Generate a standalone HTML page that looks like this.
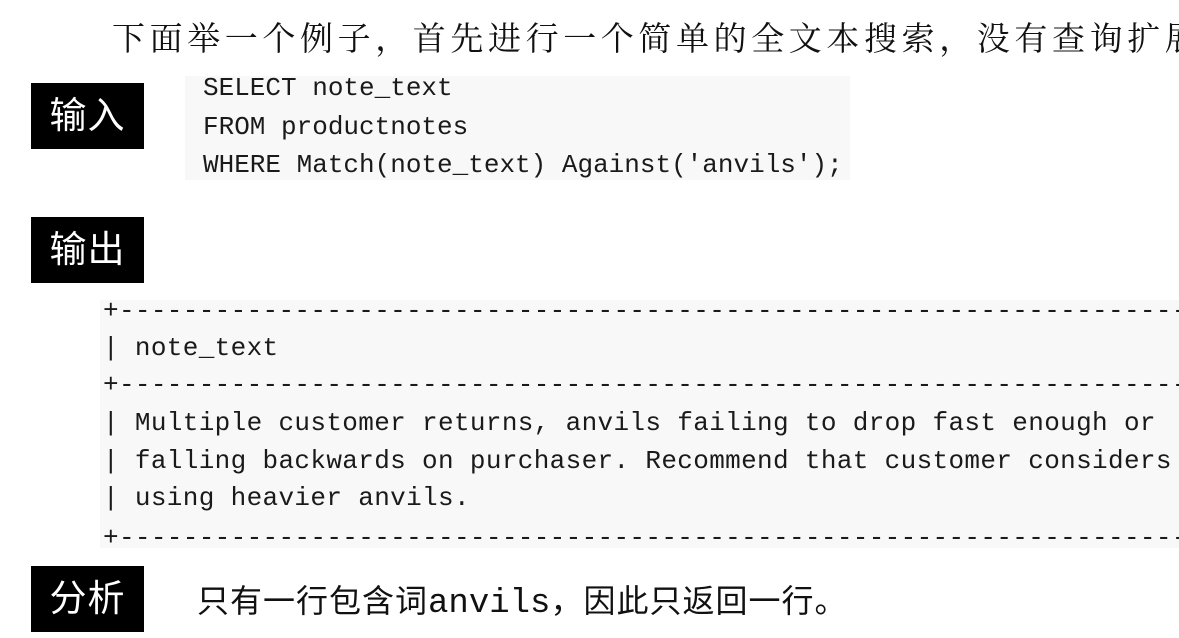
<!DOCTYPE html>
<html><head><meta charset="utf-8"><style>
body{margin:0;width:1179px;height:638px;background:#fff;position:relative;overflow:hidden}
.a{position:absolute;white-space:pre}
.t{font-family:"Liberation Serif","Noto Serif CJK SC",serif;font-size:33px;letter-spacing:4.6px;color:#111;left:112px;top:13px}
.lab{position:absolute;left:31px;width:113px;height:66px;background:#000;color:#fff;font-family:"Liberation Sans","Noto Sans CJK SC",sans-serif;font-size:37px;line-height:66px;text-align:center;letter-spacing:1px}
.m{font-family:"Liberation Mono",monospace;font-size:26px;color:#1a1a1a;line-height:30px}
.o{letter-spacing:0.35px}
.box{position:absolute;background:#f8f8f8}
.an{font-family:"Liberation Sans","Noto Sans CJK SC",sans-serif;font-size:32px;color:#111;left:197px;top:576px;letter-spacing:1px}
.an span{font-family:"Liberation Mono",monospace;font-size:34px;letter-spacing:0}
</style></head><body>
<div class="a t">下面举一个例子，首先进行一个简单的全文本搜索，没有查询扩展</div>
<div class="box" style="left:185px;top:76px;width:665px;height:104px"></div>
<div class="lab" style="top:83px">输入</div>
<div class="a m" style="left:203px;top:73px">SELECT note_text</div>
<div class="a m" style="left:203px;top:112px">FROM productnotes</div>
<div class="a m" style="left:203px;top:150px">WHERE Match(note_text) Against('anvils');</div>
<div class="lab" style="top:217px">输出</div>
<div class="box" style="left:100px;top:300px;width:1079px;height:248px"></div>
<div class="a m o" style="left:103px;top:296px">+---------------------------------------------------------------------</div>
<div class="a m o" style="left:103px;top:333px">| note_text</div>
<div class="a m o" style="left:103px;top:370px">+---------------------------------------------------------------------</div>
<div class="a m o" style="left:103px;top:408px">| Multiple customer returns, anvils failing to drop fast enough or</div>
<div class="a m o" style="left:103px;top:446px">| falling backwards on purchaser. Recommend that customer considers</div>
<div class="a m o" style="left:103px;top:483px">| using heavier anvils.</div>
<div class="a m o" style="left:103px;top:523px">+---------------------------------------------------------------------</div>
<div class="lab" style="top:566px">分析</div>
<div class="a an">只有一行包含词<span>anvils</span>，因此只返回一行。</div>
</body></html>
